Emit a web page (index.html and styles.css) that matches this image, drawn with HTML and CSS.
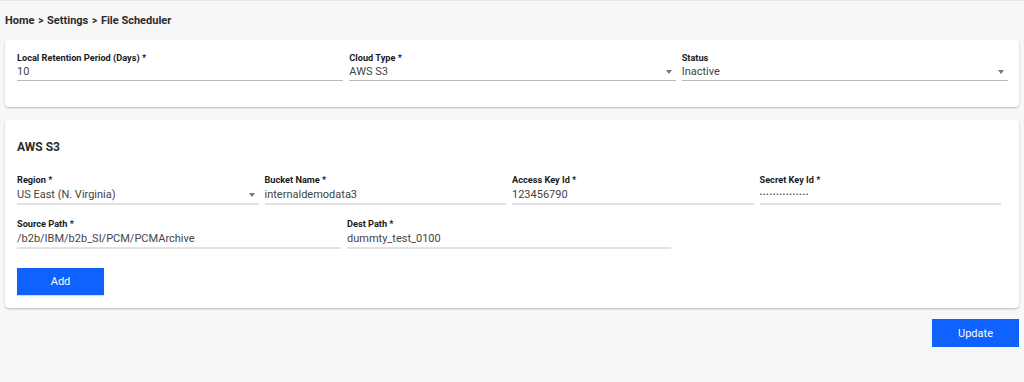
FILE: index.html
```html
<!DOCTYPE html>
<html lang="en">

<head>
    <meta charset="UTF-8">
    <meta name="viewport" content="width=device-width, initial-scale=1.0">
    <title>File Scheduler</title>
    <link rel="stylesheet" href="styles.css">
</head>

<body>
    <div class="breadcrumb">Home <span class="sep">&gt;</span> Settings <span class="sep">&gt;</span> File Scheduler</div>

    <div class="card card-top">
        <div class="grid-3">
            <div class="field">
                <label>Local Retention Period (Days) *</label>
                <div class="value">10</div>
            </div>
            <div class="field select">
                <label>Cloud Type *</label>
                <div class="value"><span>AWS S3</span><i class="caret"></i></div>
            </div>
            <div class="field select">
                <label>Status</label>
                <div class="value"><span>Inactive</span><i class="caret"></i></div>
            </div>
        </div>
    </div>

    <div class="card card-cloud">
        <h2>AWS S3</h2>
        <div class="fields">
            <div class="grid-4">
                <div class="field select">
                    <label>Region *</label>
                    <div class="value"><span>US East (N. Virginia)</span><i class="caret"></i></div>
                </div>
                <div class="field">
                    <label>Bucket Name *</label>
                    <div class="value">internaldemodata3</div>
                </div>
                <div class="field">
                    <label>Access Key Id *</label>
                    <div class="value">123456790</div>
                </div>
                <div class="field">
                    <label>Secret Key Id *</label>
                    <div class="value secret">•••••••••••••••</div>
                </div>
            </div>
            <div class="grid-3">
                <div class="field">
                    <label>Source Path *</label>
                    <div class="value">/b2b/IBM/b2b_SI/PCM/PCMArchive</div>
                </div>
                <div class="field">
                    <label>Dest Path *</label>
                    <div class="value">dummty_test_0100</div>
                </div>
            </div>
        </div>
        <button type="button" class="btn">Add</button>
    </div>

    <div class="actions">
        <button type="button" class="btn">Update</button>
    </div>
</body>

</html>
```

FILE: styles.css
```css
body {
    font-family: Roboto, "Liberation Sans", Arial, sans-serif;
    background-color: #f7f7f7;
    margin: 0;
    padding: 0 5px;
    border-top: 1px solid #e6e6e6;
    color: #222;
}

.breadcrumb {
    font-size: 11px;
    font-weight: bold;
    line-height: 14px;
    padding: 13px 0 12px;
    color: #2b2b2b;
}

.breadcrumb .sep {
    font-size: 10px;
    margin: 0 1px;
}

.card {
    background-color: #fff;
    border-radius: 4px;
    box-shadow: 0 1px 2px rgba(0, 0, 0, 0.25);
}

.card-top {
    padding: 12px 11px 26px 12px;
}

.card-cloud {
    margin-top: 13px;
    padding: 19px 18px 13px 12px;
}

.card-cloud h2 {
    margin: 0;
    font-size: 12px;
    font-weight: bold;
    line-height: 16px;
    color: #2b2b2b;
}

.grid-3 {
    display: grid;
    grid-template-columns: repeat(3, 1fr);
    column-gap: 6px;
}

.grid-4 {
    display: grid;
    grid-template-columns: repeat(4, 1fr);
    column-gap: 6px;
}

.fields {
    display: flex;
    flex-direction: column;
    gap: 13px;
    margin-top: 19px;
}

.field label {
    display: block;
    font-size: 9.2px;
    font-weight: bold;
    line-height: 12px;
    color: #1a1a1a;
}

.field .value {
    display: flex;
    align-items: center;
    font-size: 11px;
    line-height: 16px;
    color: #444;
    border-bottom: 1px solid #b8b8b8;
}

.card-cloud .field label {
    margin-bottom: 1px;
}

.card-cloud .field .value {
    border-bottom: 2px solid #e2e2e2;
}

.field .value span {
    flex: 1;
}

.caret {
    width: 0;
    height: 0;
    margin-right: 4px;
    border-left: 3px solid transparent;
    border-right: 3px solid transparent;
    border-top: 4px solid #777;
}

.secret {
    font-size: 8px !important;
    letter-spacing: 0.6px;
}

.btn {
    width: 87px;
    height: 27px;
    background-color: #0f62fe;
    color: #fff;
    border: none;
    border-radius: 0;
    font-family: inherit;
    font-size: 11px;
    cursor: pointer;
    box-shadow: 0 1px 1px rgba(0, 0, 0, 0.15);
}

.card-cloud .btn {
    margin-top: 19px;
}

.actions {
    display: flex;
    justify-content: flex-end;
    margin-top: 11px;
}

.actions .btn {
    height: 28px;
}
```
